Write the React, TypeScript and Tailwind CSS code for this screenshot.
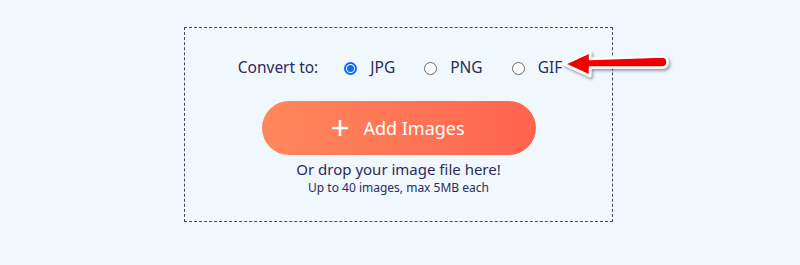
import { useState } from "react";

const formats = ["JPG", "PNG", "GIF"];

function Radio({ checked }: { checked: boolean }) {
  return checked ? (
    <span className="w-[13px] h-[13px] rounded-full border-2 border-[#0b6cf2] bg-white flex items-center justify-center">
      <span className="w-[7px] h-[7px] rounded-full bg-[#0b6cf2]" />
    </span>
  ) : (
    <span className="w-[13px] h-[13px] rounded-full border border-[#6b6b6b] bg-white" />
  );
}

function Arrow() {
  return (
    <svg
      className="absolute left-[558px] top-[44px]"
      width="116"
      height="42"
      viewBox="0 0 116 42"
    >
      <defs>
        <filter id="sh" x="-10%" y="-30%" width="130%" height="170%">
          <feDropShadow dx="1.5" dy="2" stdDeviation="1.5" floodColor="#000" floodOpacity="0.4" />
        </filter>
      </defs>
      <path
        d="M6 20 L32 8 L32 15 L104 12.5 Q109.5 12.5 109.5 18 Q109.5 23.5 104 23.5 L32 23.5 L32 32 Z"
        fill="#f20000"
        stroke="#ffffff"
        strokeWidth="2.5"
        strokeLinejoin="round"
        filter="url(#sh)"
      />
    </svg>
  );
}

export default function App() {
  const [format, setFormat] = useState("JPG");

  return (
    <div className="relative w-[800px] h-[265px] bg-[#f1f8fd] pt-[27px] font-['Noto_Sans','Open_Sans',sans-serif] text-[#2b2b5c]">
      <div className="ml-[184px] w-[429px] h-[195px] border border-dashed border-[#4a4a5a] flex flex-col items-center">
        <div className="flex items-center mt-[28px] h-[24px] text-[15.5px] ml-[3px]">
          <span className="mr-[26px]">Convert to:</span>
          {formats.map((f) => (
            <label
              key={f}
              className="flex items-center cursor-pointer mr-[29px] last:mr-0"
              onClick={() => setFormat(f)}
            >
              <Radio checked={format === f} />
              <span className="ml-[13px]">{f}</span>
            </label>
          ))}
        </div>
        <button className="mt-[21px] w-[274px] h-[54px] rounded-full bg-gradient-to-r from-[#ff875c] to-[#ff634f] text-white text-[18px] flex items-center justify-center gap-[15px]">
          <svg width="16" height="16" viewBox="0 0 16 16">
            <path d="M8 0v16M0 8h16" stroke="#fff" strokeWidth="2.6" />
          </svg>
          <span>Add Images</span>
        </button>
        <p className="mt-[4px] text-[15px] leading-[20px]">Or drop your image file here!</p>
        <p className="mt-[1px] text-[12px] leading-[16px]">Up to 40 images, max 5MB each</p>
      </div>
      <Arrow />
    </div>
  );
}
